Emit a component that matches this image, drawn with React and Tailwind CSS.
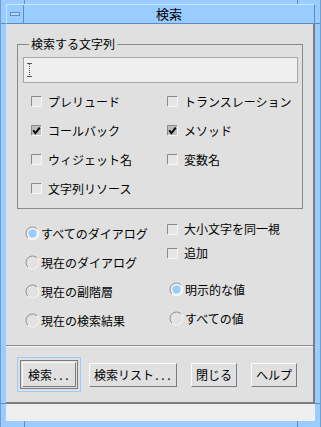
import React from 'react';

const FONT = "font-['Noto_Sans_CJK_JP','Noto_Sans_CJK_SC',sans-serif]";

function Check({ on }) {
  return (
    <svg width="11" height="11" viewBox="0 0 11 11" className="shrink-0">
      <rect x="0" y="0" width="11" height="11" fill={on ? '#bdbdbd' : '#e6e6e6'} />
      <path d="M0.5 10.5V0.5H10.5" stroke="#8a8a8a" fill="none" />
      <path d="M10.5 0.5V10.5H0.5" stroke="#f7f7f7" fill="none" />
      {on && <path d="M2.2 5.2L4.4 8.2L8.8 2.6" stroke="#000" strokeWidth="1.9" fill="none" />}
    </svg>
  );
}

function Radio({ on }) {
  return (
    <svg width="15" height="15" viewBox="0 0 15 15" className="shrink-0">
      <circle cx="7.5" cy="7.5" r="6.5" fill={on ? '#f4f4f4' : '#e2e2e2'} />
      <path d="M2.9 12.1A6.5 6.5 0 0 1 12.1 2.9" stroke="#8f8f8f" fill="none" />
      <path d="M12.1 2.9A6.5 6.5 0 0 1 2.9 12.1" stroke="#f8f8f8" fill="none" />
      {on && <circle cx="7.5" cy="7.5" r="4.2" fill="#99ccff" />}
    </svg>
  );
}

function CheckRow({ label, on, gap = 'gap-[6px]', h = 'h-[29px]' }) {
  return (
    <div className={`flex items-center ${gap} ${h}`}>
      <Check on={on} />
      <span className="text-[12px] leading-[14px] text-black whitespace-nowrap">{label}</span>
    </div>
  );
}

function RadioRow({ label, on }) {
  return (
    <div className="flex items-center gap-[1px] h-[29px]">
      <Radio on={on} />
      <span className="text-[12px] leading-[14px] text-black whitespace-nowrap">{label}</span>
    </div>
  );
}

function Dots() {
  return (
    <span className="inline-flex">
      <span className="inline-block w-[6px] text-center">.</span>
      <span className="inline-block w-[6px] text-center">.</span>
      <span className="inline-block w-[6px] text-center">.</span>
    </span>
  );
}

function Btn({ children, w }) {
  return (
    <div
      className={`${w} h-[24px] flex items-center justify-center bg-[#e0e0e0] border border-t-[#fafafa] border-l-[#fafafa] border-b-[#7c7c7c] border-r-[#7c7c7c] text-[12px] leading-[14px] text-black whitespace-nowrap`}
    >
      {children}
    </div>
  );
}

export default function App() {
  return (
    <div className={`relative w-[321px] h-[427px] bg-[#99ccff] overflow-hidden ${FONT} border-l border-r border-[#6f9fd0]`}>
      {/* resize ticks */}
      <div className="absolute left-[23px] top-0 w-px h-[4px] bg-[#5f8cbc]" />
      <div className="absolute left-[296px] top-0 w-px h-[4px] bg-[#5f8cbc]" />
      <div className="absolute left-[23px] bottom-0 w-px h-[6px] bg-[#5f8cbc]" />
      <div className="absolute left-[296px] bottom-0 w-px h-[6px] bg-[#5f8cbc]" />
      <div className="absolute left-0 top-[23px] w-[5px] h-px bg-[#5f8cbc]" />
      <div className="absolute right-0 top-[23px] w-[5px] h-px bg-[#5f8cbc]" />
      <div className="absolute left-0 top-[403px] w-[5px] h-px bg-[#5f8cbc]" />
      <div className="absolute right-0 top-[403px] w-[5px] h-px bg-[#5f8cbc]" />

      <div className="pt-[4px] pl-[5px] pr-[5px] flex flex-col">
        {/* title bar */}
        <div className="h-[20px] flex border-t border-t-[#cfe6ff] border-b border-b-[#5f8cbc] border-l border-l-[#cfe6ff] border-r border-r-[#5f8cbc] bg-[#99ccff]">
          <div className="w-[17px] h-full flex items-center justify-center border-r border-r-[#5f8cbc]">
            <div className="w-[10px] h-[4px] border border-[#5f8cbc] bg-[#b8dcff]" />
          </div>
          <div className="flex-1 flex items-center justify-center text-[13px] leading-[16px] text-black">検索</div>
        </div>

        {/* window body */}
        <div className="h-[397px] bg-[#efefef] flex flex-col">
          <div className="h-[380px] bg-[#e0e0e0] border-r-2 border-b-2 border-[#7d7d7d] flex flex-col">
            {/* group box */}
            <fieldset className="mt-[12px] ml-[11px] w-[286px] h-[173px] border border-[#8a8a8a] flex flex-col">
              <legend className="ml-[11px] px-[2px] text-[12px] leading-[16px] text-black">検索する文字列</legend>
              <div className="mt-[5px] ml-[5px] w-[275px] h-[26px] bg-[#efefef] border border-[#a5a5a5] flex items-center pl-[3px]">
                <svg width="5" height="14" viewBox="0 0 5 14">
                  <path d="M0 0.5H5M0 13.5H5" stroke="#555" />
                  <path d="M2.5 1V13" stroke="#555" strokeDasharray="1 1" />
                </svg>
              </div>
              <div className="mt-[4px] ml-[13px] grid grid-cols-[136px_1fr]">
                <CheckRow label="プレリュード" />
                <CheckRow label="トランスレーション" />
                <CheckRow label="コールバック" on />
                <CheckRow label="メソッド" on />
                <CheckRow label="ウィジェット名" />
                <CheckRow label="変数名" />
                <CheckRow label="文字列リソース" />
              </div>
            </fieldset>

            {/* options */}
            <div className="h-[136px] flex">
              <div className="ml-[19px] w-[142px] pt-[10px] flex flex-col">
                <RadioRow label="すべてのダイアログ" on />
                <RadioRow label="現在のダイアログ" />
                <RadioRow label="現在の副階層" />
                <RadioRow label="現在の検索結果" />
              </div>
              <div className="pt-[8px] flex flex-col">
                <CheckRow label="大小文字を同一視" gap="gap-[6px]" h="h-[24px]" />
                <CheckRow label="追加" gap="gap-[6px]" h="h-[24px]" />
                <div className="mt-[10px] ml-[2px]">
                  <RadioRow label="明示的な値" on />
                  <RadioRow label="すべての値" />
                </div>
              </div>
            </div>

            {/* separator */}
            <div className="h-px bg-[#8a8a8a]" />
            <div className="h-px bg-[#f6f6f6]" />

            {/* buttons */}
            <div className="h-[55px] pl-[11px] flex items-center">
              <div className="w-[64px] h-[35px] border border-[#99ccff] p-[2px]">
                <div className="w-full h-full border border-[#7c7c7c] p-px">
                  <div className="w-full h-full flex items-center justify-center bg-[#e0e0e0] border border-t-[#fafafa] border-l-[#fafafa] border-b-[#7c7c7c] border-r-[#7c7c7c] text-[12px] leading-[14px] text-black whitespace-nowrap">
                    検索<Dots />
                  </div>
                </div>
              </div>
              <div className="ml-[8px]">
                <Btn w="w-[88px]">検索リスト<Dots /></Btn>
              </div>
              <div className="ml-[14px]">
                <Btn w="w-[46px]">閉じる</Btn>
              </div>
              <div className="ml-[14px]">
                <Btn w="w-[46px]">ヘルプ</Btn>
              </div>
            </div>
          </div>
        </div>
      </div>
    </div>
  );
}
